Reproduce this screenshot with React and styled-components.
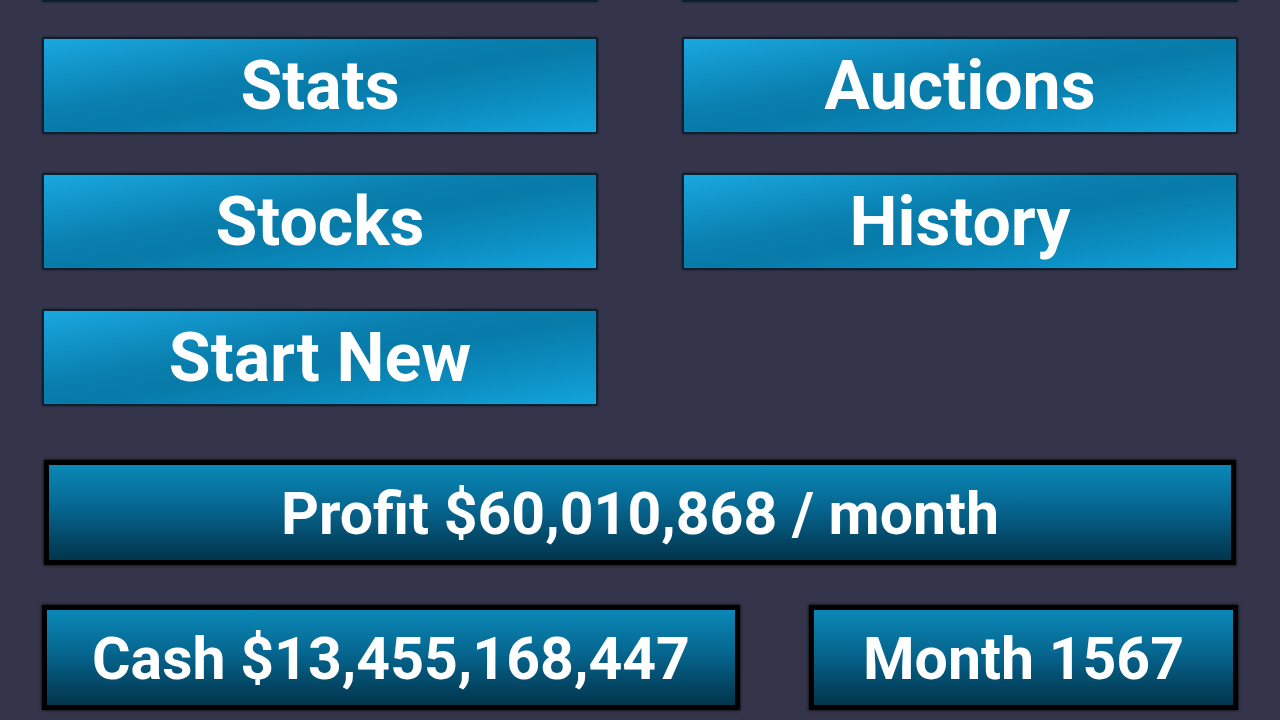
import React from 'react'
import styled, { createGlobalStyle } from 'styled-components'

const GlobalStyle = createGlobalStyle`
  html, body {
    margin: 0;
    padding: 0;
    background: #34344a;
    overflow: hidden;
  }
  body {
    font-family: Roboto, "Liberation Sans", sans-serif;
  }
`

const Screen = styled.div`
  width: 1280px;
  height: 720px;
  overflow: hidden;
  background: #34344a;
  padding: 0 42px;
  box-sizing: border-box;
`

const MenuGrid = styled.div`
  display: grid;
  grid-template-columns: 556px 556px;
  grid-auto-rows: 97px;
  column-gap: 84px;
  row-gap: 39px;
  margin-top: ${props => props.offset || 0}px;
`

const MenuButton = styled.button`
  box-sizing: border-box;
  height: 97px;
  margin: 0;
  padding: 0;
  border: 2px solid #0c1f30;
  border-radius: 2px;
  box-shadow: 0 0 2px rgba(5, 15, 25, 0.8);
  background: linear-gradient(to bottom right, #19a8e0 0%, #0a80b0 38%, #077aa8 52%, #0b8cbf 75%, #12a4dc 100%);
  color: #fff;
  font-family: Roboto, "Liberation Sans", sans-serif;
  font-weight: 700;
  font-size: 68px;
  line-height: 1;
  display: flex;
  align-items: center;
  justify-content: center;
  cursor: pointer;
`

const InfoBox = styled.div`
  box-sizing: border-box;
  height: 105px;
  border: 5px solid #000;
  box-shadow: 0 0 3px #000;
  background: linear-gradient(to bottom, #0a88b8 0%, #06668f 45%, #03415e 85%, #02354d 100%);
  color: #fff;
  font-weight: 700;
  font-size: 59px;
  line-height: 1;
  display: flex;
  align-items: center;
  justify-content: center;
  padding-top: 2px;
`

const ProfitRow = styled.div`
  margin: 54px 2px 0;
`

const StatusRow = styled.div`
  display: grid;
  grid-template-columns: 698px 429px;
  column-gap: 69px;
  margin-top: 40px;
`

export default function App() {
  const menu = ['Stats', 'Auctions', 'Stocks', 'History', 'Start New']

  return (
    <Screen>
      <GlobalStyle />
      <MenuGrid offset={-95} aria-hidden="true">
        <MenuButton tabIndex={-1} />
        <MenuButton tabIndex={-1} />
      </MenuGrid>
      <MenuGrid offset={35}>
        {menu.map(label => (
          <MenuButton key={label}>{label}</MenuButton>
        ))}
      </MenuGrid>
      <ProfitRow>
        <InfoBox>Profit $60,010,868 / month</InfoBox>
      </ProfitRow>
      <StatusRow>
        <InfoBox>Cash $13,455,168,447</InfoBox>
        <InfoBox>Month 1567</InfoBox>
      </StatusRow>
    </Screen>
  )
}
